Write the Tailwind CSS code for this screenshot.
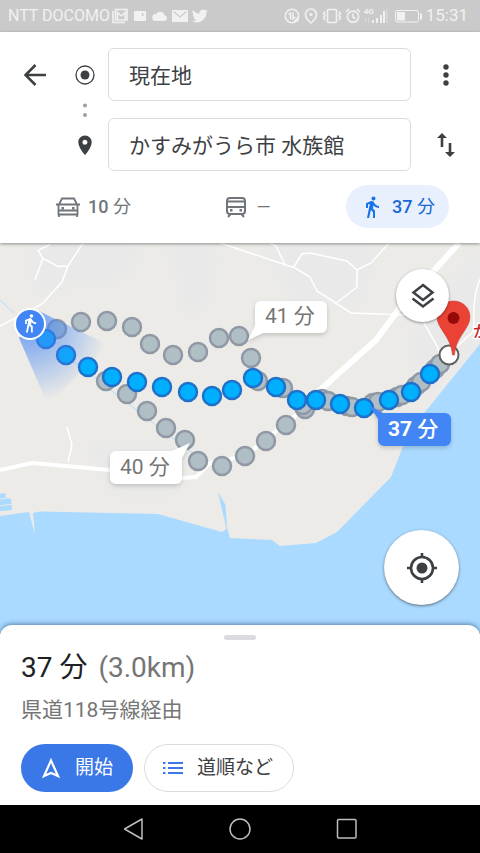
<!DOCTYPE html>
<html lang="ja">
<head>
  <meta charset="UTF-8">
  <meta name="viewport" content="width=device-width, initial-scale=1.0">
  <title>経路</title>
  <script src="https://cdn.jsdelivr.net/npm/@tailwindcss/browser@4"></script>
</head>
<body class="flex min-h-screen flex-col bg-white font-[Roboto,'Noto_Sans_CJK_JP',sans-serif] text-[#3c4043]">

  <!-- Status bar -->
  <div class="flex h-8 shrink-0 items-center justify-between bg-[#cacaca] pl-2 pr-3 text-base text-[#f1f1f1]">
    <div class="flex items-center">
      <span>NTT DOCOMO</span>
      <div class="ml-0.5 flex items-center gap-1">
        <svg class="h-4 w-4" viewBox="0 0 16 16" fill="none" stroke="currentColor" stroke-width="1.600"><path d="M3.500 1.500h11.500v10.500h-11.500z"/><path d="M5.500 11V4.500l3.800 3.500L13 4.500V11"/><path d="M1 3v11.500h12"/></svg>
        <svg class="h-4 w-4" viewBox="0 0 16 16" fill="currentColor"><path fill-rule="evenodd" d="M3 3h10a1 1 0 011 1v8a1 1 0 01-1 1H3a1 1 0 01-1-1V4a1 1 0 011-1zm7 2v3h1.500V5z"/></svg>
        <svg class="h-4 w-4" viewBox="0 0 16 16" fill="currentColor"><path d="M12.800 7.500A4.800 4.800 0 004 6a3.500 3.500 0 00-.5 7h9a2.800 2.800 0 00.3-5.500z"/></svg>
        <svg class="h-4 w-4" viewBox="0 0 16 16"><path fill="currentColor" d="M0 2h16v12H0z"/><path fill="none" stroke="#cacaca" stroke-width="1.300" d="M1.500 3.500L8 9l6.500-5.500"/></svg>
        <svg class="h-4 w-4" viewBox="0 0 24 24" fill="currentColor"><path d="M23.600 4.600c-.9.400-1.800.7-2.800.8 1-.6 1.800-1.600 2.200-2.700-1 .6-2 1-3.100 1.200A4.900 4.900 0 0011.500 8.400C7.500 8.200 3.900 6.200 1.500 3.200A4.900 4.900 0 003 9.800c-.8 0-1.500-.2-2.200-.6 0 2.300 1.600 4.400 3.900 4.900-.7.200-1.500.2-2.200.1.600 2 2.400 3.400 4.600 3.400A9.900 9.900 0 010 19.500a14 14 0 007.500 2.200c9.100 0 14.300-7.700 14-14.600.8-.7 1.500-1.500 2.100-2.500z"/></svg>
      </div>
    </div>
    <div class="flex items-center gap-[3px]">
      <svg class="h-4 w-4" viewBox="0 0 16 16" fill="none" stroke="currentColor" stroke-width="1.500"><circle cx="8" cy="8" r="6.700"/><path d="M4.500 6.500L6.500 5v6.500M9 4.500V11l2.500-2"/><path d="M10 14l4-4.500v3z" fill="currentColor"/></svg>
      <svg class="h-4 w-4" viewBox="0 0 16 16" fill="none" stroke="currentColor" stroke-width="1.600"><path d="M8 15S2.500 10.500 2.500 6.500a5.500 5.500 0 0111 0C13.500 10.500 8 15 8 15z"/><circle cx="8" cy="6.500" r="1.600" fill="currentColor" stroke="none"/></svg>
      <svg class="h-4 w-5" viewBox="0 0 20 16" fill="none" stroke="currentColor" stroke-width="1.600"><rect x="5.500" y="1.500" width="9" height="13" rx="1"/><path d="M3 3.500L1.500 5.500 3 7.500 1.500 9.500 3 12M17 3.500l1.500 2-1.500 2 1.500 2-1.500 2.500"/></svg>
      <svg class="h-4 w-4" viewBox="0 0 16 16" fill="none" stroke="currentColor" stroke-width="1.600"><circle cx="8" cy="8.700" r="5.600"/><path d="M8 5.500V9l2.300 1.500M1 4l3-2.800M15 4l-3-2.800"/></svg>
      <div class="relative h-4 w-6">
        <span class="absolute left-0 top-0 text-[8px] font-bold leading-none">4G</span>
        <svg class="h-4 w-6" viewBox="0 0 24 16" fill="currentColor"><path d="M8 12h2v3H8zM12 10h2v5h-2zM16 7h2v8h-2zM19 3h2v12h-2z"/><path opacity=".4" d="M22 1h1.500v14H22zM1 15v-5h1v5zM4 15v-5h1v5z"/></svg>
      </div>
      <svg class="ml-1 h-4 w-7" viewBox="0 0 28 16" fill="none" stroke="currentColor"><rect x=".5" y="2.500" width="23" height="11.500" rx="1.500"/><path fill="currentColor" stroke="none" d="M2 4h8v8.500H2zM25 5.500h2v6h-2z"/></svg>
      <span class="text-[17px]">15:31</span>
    </div>
  </div>

  <!-- Directions header -->
  <header class="relative z-10 shrink-0 bg-white pb-[15px] pt-4 shadow-[0_1px_3px_rgba(0,0,0,0.4)]">
    <form class="grid grid-cols-[70px_30px_1fr_69px] grid-rows-[53px_17px_53px] items-center">
      <button type="button" aria-label="戻る" class="flex justify-center">
        <svg class="h-8 w-8" viewBox="0 0 32 32" fill="none" stroke="#3c4043" stroke-width="2.500"><path d="M27 16H7M16.500 6L6.500 16l10 10"/></svg>
      </button>
      <svg class="h-5 w-5 justify-self-center" viewBox="0 0 20 20"><circle cx="10" cy="10" r="9" fill="none" stroke="#3c4043" stroke-width="1.300"/><circle cx="10" cy="10" r="4.500" fill="#3c4043"/></svg>
      <input type="text" aria-label="出発地" value="現在地" class="ml-2 h-full min-w-0 rounded-md border border-[#dadce0] px-5 pb-0.5 text-[21px] outline-none">
      <button type="button" aria-label="メニュー" class="flex justify-center">
        <svg class="h-6 w-6" viewBox="0 0 24 24" fill="#3c4043"><circle cx="12" cy="4" r="2.700"/><circle cx="12" cy="12" r="2.700"/><circle cx="12" cy="20" r="2.700"/></svg>
      </button>

      <svg class="col-start-2 h-4 w-4 justify-self-center" viewBox="0 0 16 16" fill="#9aa0a6"><circle cx="8" cy="3.500" r="2"/><circle cx="8" cy="13" r="2"/></svg>

      <svg class="col-start-2 row-start-3 h-6 w-6 justify-self-center" viewBox="0 0 24 24" fill="#3c4043"><path d="M12 2.500c-3.800 0-6.700 3-6.700 6.700C5.300 14.500 12 22 12 22s6.700-7.500 6.700-12.800c0-3.700-2.900-6.700-6.700-6.700zm0 9.200a2.500 2.500 0 110-5 2.500 2.500 0 010 5z"/></svg>
      <input type="text" aria-label="目的地" value="かすみがうら市 水族館" class="col-start-3 row-start-3 ml-2 h-full min-w-0 rounded-md border border-[#dadce0] px-5 pb-0.5 text-[21px] outline-none">
      <button type="button" aria-label="入れ替え" class="col-start-4 row-start-3 flex justify-center">
        <svg class="h-6 w-6" viewBox="0 0 24 24"><path d="M8 14V3M16 10v11" fill="none" stroke="#3c4043" stroke-width="2.600"/><path fill="#3c4043" d="M8 0l5 5H3zM16 24l5-5H11z"/></svg>
      </button>
    </form>

    <nav class="mt-3.5 flex items-center justify-between pl-[38px] pr-[31px] text-lg font-medium text-[#70757a]">
      <button type="button" class="flex h-[43px] items-center gap-2 px-[18px]">
        <svg class="h-6 w-6" viewBox="0 0 24 24" fill="none" stroke="currentColor" stroke-width="2"><path d="M2.500 10.500v9h19v-9L18 3.500H6zM0 9.500h24M3 19v3M21 19v3M3 15.500h18" stroke-width="1.800"/><path fill="currentColor" stroke="none" d="M5.500 12H8v2.500H5.500zM16 12h2.500v2.500H16z"/></svg>
        <span>10 <span class="font-normal">分</span></span>
      </button>
      <button type="button" class="flex h-[43px] items-center gap-2 px-[18px]">
        <svg class="h-6 w-6" viewBox="0 0 24 24" fill="none" stroke="currentColor" stroke-width="2"><rect x="3" y="3" width="18" height="16" rx="3"/><path d="M3 6.500h18M3 12h18M6.500 19l-2.500 3M17.500 19l2.500 3"/><path fill="currentColor" stroke="none" d="M6 14h2.500v2.500H6zM15.500 14H18v2.500h-2.500z"/></svg>
        <span class="font-normal">—</span>
      </button>
      <button type="button" class="flex h-[43px] items-center gap-2 rounded-full bg-[#e8f0fe] px-3.5 text-[#1967d2]">
        <svg class="h-6 w-6" viewBox="0 0 24 24" fill="#1a73e8"><path d="M13.500 5.500c1.100 0 2-.9 2-2s-.9-2-2-2-2 .9-2 2 .9 2 2 2zM9.800 8.900L7 23h2.100l1.800-8 2.100 2v6h2v-7.500l-2.100-2 .6-3C14.800 12 16.800 13 19 13v-2c-1.900 0-3.500-1-4.300-2.400l-1-1.600c-.4-.6-1-1-1.700-1-.3 0-.5.1-.8.1L6 8.300V13h2V9.600l1.800-.7"/></svg>
        <span>37 <span class="font-normal">分</span></span>
      </button>
    </nav>
  </header>

  <!-- Map -->
  <main class="relative min-h-[390px] flex-1 overflow-hidden bg-[#ecebe7]">
    <svg class="absolute inset-0 h-full w-full" viewBox="0 243 480 390" preserveAspectRatio="xMidYMid slice">
      <defs>
        <radialGradient id="beam" gradientUnits="userSpaceOnUse" cx="30" cy="324" r="78">
          <stop offset="0.150" stop-color="#4285f4" stop-opacity="0.650"/>
          <stop offset="1" stop-color="#4285f4" stop-opacity="0"/>
        </radialGradient>
        <filter id="shadow" x="-20%" y="-20%" width="140%" height="160%">
          <feDropShadow dx="0" dy="2" stdDeviation="2" flood-color="#000" flood-opacity="0.180"/>
        </filter>
        <filter id="soft"><feGaussianBlur stdDeviation="6"/></filter>
      </defs>

      <!-- land shading -->
      <g fill="#e9e9ea" filter="url(#soft)">
        <path d="M34 243h110l-15 35-60 8-20 10-18-15z"/>
        <path d="M165 243h50l-5 60-25 15-10-50z"/>
        <path d="M260 243h120l-20 60-60 5z"/>
        <path d="M410 340l70-97v100l-60 60z"/>
        <path d="M85 445h90v50h-60z"/>
      </g>

      <!-- lake -->
      <path fill="#aadaff" d="M0 516l29-4 6 23-2-22 7-1.500 118 2.500 64 18 4.500-3L218 492l7.500 13 1.500 22 3 11 42 2 8 6 36-3 21-11 54-55 11-28 23-37 55-68v289H0z"/>
      <path fill="#aadaff" d="M0 494l5-1 1 5 5 1 1 11-12 1z"/>
      <path fill="none" stroke="#ecebe7" d="M0 499l7-1M0 506l12-2"/>
      <path fill="none" stroke="#b3dcff" d="M0 300l14 13M65 355l130 100"/>

      <!-- roads -->
      <g fill="none" stroke="#fff" stroke-width="1.500">
        <path d="M83 243l-15 23-6 16-20 22-42 22M68 266l-10 .5-15-8-5-8 12-6M43 258l-8 22"/>
        <path d="M67 427l5 18-4 17"/>
        <path d="M220 243l75 25 15 9 7 14 34 22 56 2 16 6 15 27 5 22M293 268l9-14 8-1 37 8 10 9v17l-22 17M357 270l14-7 18-20M270 243l6 3 9 19M480 279c-8 20-6 40-6 52l-22 20"/>
      </g>
      <g fill="none" stroke="#fff">
        <path stroke-width="6" d="M459 243l-60 66-23 31-56 50-15 14"/>
        <path stroke-width="4" d="M0 470l32-7 78 7 72 8 14-1 14-14 35-7 60-48"/>
      </g>

      <!-- alternative routes -->
      <g fill="#b0bec5" stroke="#8f98a4" stroke-width="2.500">
        <circle cx="57" cy="329" r="9"/><circle cx="81" cy="322" r="9"/><circle cx="107" cy="321" r="9"/><circle cx="132" cy="327" r="9"/><circle cx="150" cy="344" r="9"/><circle cx="173" cy="355" r="9"/><circle cx="198" cy="352" r="9"/><circle cx="219" cy="338" r="9"/><circle cx="239" cy="336" r="9"/><circle cx="251" cy="358" r="9"/><circle cx="258" cy="381" r="9"/><circle cx="283" cy="388" r="9"/>
        <circle cx="106" cy="381" r="9"/><circle cx="127" cy="394" r="9"/><circle cx="147" cy="411" r="9"/><circle cx="166" cy="428" r="9"/><circle cx="185" cy="440" r="9"/><circle cx="198" cy="461" r="9"/><circle cx="222" cy="466" r="9"/><circle cx="245" cy="456" r="9"/><circle cx="266" cy="441" r="9"/><circle cx="286" cy="425" r="9"/><circle cx="305" cy="409" r="9"/>
        <circle cx="303" cy="405" r="9"/><circle cx="322" cy="399" r="9"/><circle cx="328" cy="401" r="9"/><circle cx="347" cy="406" r="9"/><circle cx="352" cy="407" r="9"/><circle cx="373" cy="403" r="9"/><circle cx="378" cy="402" r="9"/><circle cx="397" cy="397" r="9"/><circle cx="402" cy="395" r="9"/><circle cx="416" cy="386" r="9"/><circle cx="421" cy="382" r="9"/><circle cx="435" cy="369" r="9"/><circle cx="440" cy="364" r="9"/>
      </g>
      <!-- walking route -->
      <g fill="#00b0ff" stroke="#1f70c8" stroke-width="2.500">
        <circle cx="46" cy="339" r="9"/><circle cx="66" cy="355" r="9"/><circle cx="88" cy="367" r="9"/><circle cx="112" cy="377" r="9"/><circle cx="137" cy="382" r="9"/><circle cx="162" cy="387" r="9"/><circle cx="188" cy="392" r="9"/><circle cx="212" cy="396" r="9"/><circle cx="232" cy="390" r="9"/><circle cx="253" cy="378" r="9"/><circle cx="276" cy="387" r="9"/><circle cx="297" cy="400" r="9"/><circle cx="316" cy="400" r="9"/><circle cx="340" cy="404" r="9"/><circle cx="364" cy="408" r="9"/><circle cx="389" cy="400" r="9"/><circle cx="411" cy="392" r="9"/><circle cx="430" cy="374" r="9"/>
      </g>
      <!-- heading beam -->
      <path fill="url(#beam)" d="M39 311l69 34-60 60-29-67z"/>

      <!-- current position -->
      <circle cx="30" cy="324" r="15" fill="#4285f4" stroke="#fff" stroke-width="2"/>
      <path transform="translate(20 313) scale(.85)" fill="#fff" d="M13.500 5.500c1.100 0 2-.9 2-2s-.9-2-2-2-2 .9-2 2 .9 2 2 2zM9.800 8.900L7 23h2.100l1.800-8 2.100 2v6h2v-7.500l-2.100-2 .6-3C14.800 12 16.800 13 19 13v-2c-1.900 0-3.500-1-4.300-2.400l-1-1.600c-.4-.6-1-1-1.700-1-.3 0-.5.1-.8.1L6 8.300V13h2V9.600l1.800-.7"/>

      <!-- destination -->
      <circle cx="449" cy="355" r="9.500" fill="#fff" stroke="#616161" stroke-width="2"/>
      <path fill="#ea4335" stroke="#c5372c" stroke-width=".5" d="M453.500 301c-9.500 0-16.500 7-16.500 16 0 12 14 19 15.500 38h2c1.500-19 15.500-26 15.500-38 0-9-7-16-16.500-16z"/>
      <circle cx="453.500" cy="318" r="6" fill="#960a0a"/>
      <text x="473" y="337" class="text-base font-medium" fill="#c5221f" stroke="#fff" stroke-width="3" paint-order="stroke">か</text>

      <!-- travel time callouts -->
      <g fill="#fff" filter="url(#shadow)">
        <path d="M261 301h60a6 6 0 016 6v20a6 6 0 01-6 6h-58l-15 7 7-14v-19a6 6 0 016-6z"/>
        <path d="M116 451h56l18-8-8 15v20a6 6 0 01-6 6h-60a6 6 0 01-6-6v-21a6 6 0 016-6z"/>
        <path fill="#4285f4" d="M384 413h61a6 6 0 016 6v21a6 6 0 01-6 6h-61a6 6 0 01-6-6v-21l-9-14 14 8z"/>
      </g>
      <g class="text-[21px]">
        <text x="265" y="323" fill="#757575">41 分</text>
        <text x="120" y="474" fill="#757575">40 分</text>
        <text x="388" y="436" fill="#fff" class="font-bold">37 <tspan class="font-medium">分</tspan></text>
      </g>
    </svg>

    <button type="button" aria-label="レイヤ" class="absolute right-[31px] top-[26px] flex h-[53px] w-[53px] items-center justify-center rounded-full bg-white shadow-[0_1px_3px_rgba(0,0,0,0.4)]">
      <svg class="h-7 w-7" viewBox="0 0 28 28" fill="none" stroke="#3c4043" stroke-width="2.500"><path d="M14 3l9.500 7.500L14 18l-9.500-7.500z"/><path d="M3.500 16.500L14 24.500l10.500-8"/></svg>
    </button>
    <button type="button" aria-label="現在地を表示" class="absolute bottom-7 right-[21px] flex h-[75px] w-[75px] items-center justify-center rounded-full bg-white shadow-[0_1px_3px_rgba(0,0,0,0.5)]">
      <svg class="h-8 w-8" viewBox="0 0 32 32" fill="none" stroke="#3c4043" stroke-width="2.600"><circle cx="16" cy="16" r="11"/><path d="M16 1v4M16 27v4M1 16h4M27 16h4"/><circle cx="16" cy="16" r="5.500" fill="#3c4043" stroke="none"/></svg>
    </button>
  </main>

  <!-- Route summary sheet -->
  <section class="relative -mt-2 flex shrink-0 flex-col rounded-t-xl bg-white px-[21px] pb-[13px] pt-2.5 shadow-[0_-1px_5px_rgba(0,40,90,0.5)]">
    <div class="h-[5px] w-8 self-center rounded-full bg-[#dadce0]"></div>
    <h1 class="mt-2.5 text-[28px] leading-9 text-[#202124]">37 分 <span class="ml-1 text-[#757575]">(3.0km)</span></h1>
    <p class="mt-2 text-[21px] leading-8 text-[#757575]">県道118号線経由</p>
    <div class="mt-[18px] flex gap-[11px] text-[19px]">
      <button type="button" class="flex h-12 items-center gap-3 rounded-full bg-[#3b78e7] pl-[18px] pr-5 text-white">
        <svg class="h-6 w-6" viewBox="0 0 24 24" fill="none" stroke="currentColor" stroke-width="2.200"><path d="M12 4.500L19 20l-7-3-7 3z"/></svg>
        開始
      </button>
      <button type="button" class="flex h-12 items-center gap-3 rounded-full border border-[#dadce0] pl-4 pr-5">
        <svg class="h-6 w-6" viewBox="0 0 24 24" fill="#3b78e7"><path d="M7 6h15v2H7zM7 11h15v2H7zM7 16h15v2H7zM2 6h2.500v2H2zM2 11h2.500v2H2zM2 16h2.500v2H2z"/></svg>
        道順など
      </button>
    </div>
  </section>

  <!-- System navigation -->
  <div class="relative flex h-12 shrink-0 items-center justify-center gap-[83px] bg-black text-[#bdbdbd]">
    <button type="button" aria-label="戻る"><svg class="block h-6 w-6" viewBox="0 0 24 24" fill="none" stroke="currentColor" stroke-width="1.500" stroke-linejoin="round"><path d="M21 2v20L3.500 12z"/></svg></button>
    <button type="button" aria-label="ホーム"><svg class="block h-6 w-6" viewBox="0 0 24 24" fill="none" stroke="currentColor" stroke-width="1.500"><circle cx="12" cy="12" r="10"/></svg></button>
    <button type="button" aria-label="履歴"><svg class="block h-6 w-6" viewBox="0 0 24 24" fill="none" stroke="currentColor" stroke-width="1.500"><rect x="2.500" y="2.500" width="18.500" height="18.500" rx="1"/></svg></button>
  </div>
</body>
</html>
